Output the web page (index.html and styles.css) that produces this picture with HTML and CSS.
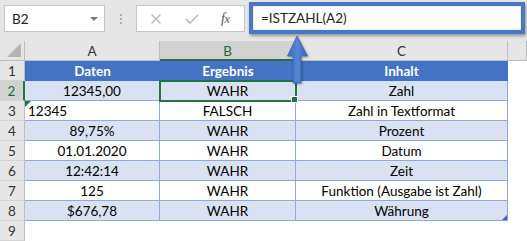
FILE: index.html
```html
<!DOCTYPE html>
<html lang="de">
<head>
<meta charset="utf-8">
<title>ISTZAHL</title>
<link rel="stylesheet" href="styles.css">
</head>
<body>
<div class="app">
  <div class="toolbar">
    <div class="namebox"><span class="name">B2</span><span class="caret"></span></div>
    <div class="grip"><i></i><i></i><i></i></div>
    <div class="fnbox">
      <svg class="ico" width="12" height="12" viewBox="0 0 12 12"><path d="M1.5 1.5 L10.5 10.5 M10.5 1.5 L1.5 10.5" stroke="#b8b8b8" stroke-width="1.4" fill="none"/></svg>
      <svg class="ico" width="14" height="12" viewBox="0 0 14 12"><path d="M1 6 L5 10 L13 2" stroke="#b8b8b8" stroke-width="1.6" fill="none"/></svg>
      <span class="fx"><i>f</i><i class="x">x</i></span>
    </div>
    <div class="formula">=ISTZAHL(A2)</div>
  </div>
  <div class="sheet">
    <div class="corner"><span class="tri"></span></div>
    <div class="ch">A</div>
    <div class="ch sel">B</div>
    <div class="ch">C</div>
    <div class="ch"></div>

    <div class="rh">1</div>
    <div class="c hd">Daten</div>
    <div class="c hd">Ergebnis</div>
    <div class="c hd">Inhalt</div>
    <div class="e"></div>

    <div class="rh sel">2</div>
    <div class="c band">12345,00</div>
    <div class="c band active">WAHR</div>
    <div class="c band">Zahl</div>
    <div class="e"></div>

    <div class="rh">3</div>
    <div class="c left err">12345</div>
    <div class="c">FALSCH</div>
    <div class="c">Zahl in Textformat</div>
    <div class="e"></div>

    <div class="rh">4</div>
    <div class="c band">89,75%</div>
    <div class="c band">WAHR</div>
    <div class="c band">Prozent</div>
    <div class="e"></div>

    <div class="rh">5</div>
    <div class="c">01.01.2020</div>
    <div class="c">WAHR</div>
    <div class="c">Datum</div>
    <div class="e"></div>

    <div class="rh">6</div>
    <div class="c band">12:42:14</div>
    <div class="c band">WAHR</div>
    <div class="c band">Zeit</div>
    <div class="e"></div>

    <div class="rh">7</div>
    <div class="c">125</div>
    <div class="c">WAHR</div>
    <div class="c">Funktion (Ausgabe ist Zahl)</div>
    <div class="e"></div>

    <div class="rh">8</div>
    <div class="c band">$676,78</div>
    <div class="c band">WAHR</div>
    <div class="c band resize">Währung</div>
    <div class="e"></div>

    <div class="rh">9</div>
    <div class="e"></div>
    <div class="e"></div>
    <div class="e"></div>
    <div class="e"></div>
  </div>
  <svg class="arrow" width="26" height="50" viewBox="0 0 26 50">
    <defs>
      <linearGradient id="ag" x1="0" y1="0" x2="1" y2="0">
        <stop offset="0" stop-color="#3f6cc0"/>
        <stop offset="0.5" stop-color="#5585d6"/>
        <stop offset="1" stop-color="#3a66b8"/>
      </linearGradient>
    </defs>
    <path d="M12 1 L2.5 21 L8 21 L8 48 L16 48 L16 21 L22.5 21 Z" fill="url(#ag)" stroke="#3b65b3" stroke-width="0.8"/>
  </svg>
</div>
</body>
</html>
```
FILE: styles.css
```css
html, body {
  margin: 0;
  padding: 0;
  background: #ffffff;
}
.app {
  position: relative;
  width: 527px;
  height: 241px;
  overflow: hidden;
  font-family: Lato, "Liberation Sans", sans-serif;
  font-size: 13.5px;
  color: #000;
}
.toolbar {
  height: 41px;
  background: #e6e6e6;
  display: flex;
  align-items: flex-start;
  box-sizing: border-box;
  padding-top: 2px;
  padding-left: 4px;
}
.namebox {
  margin-top: 3px;
  width: 101px;
  height: 27px;
  box-sizing: border-box;
  background: #fff;
  border: 1px solid #c6c6c6;
  display: flex;
  align-items: center;
  justify-content: space-between;
  padding: 0 6px 0 7px;
  font-size: 13.5px;
  color: #222;
}
.caret {
  width: 0;
  height: 0;
  border-left: 4px solid transparent;
  border-right: 4px solid transparent;
  border-top: 4px solid #777;
}
.grip {
  width: 31px;
  height: 27px;
  margin-top: 3px;
  display: flex;
  flex-direction: column;
  align-items: center;
  justify-content: center;
  gap: 2px;
}
.grip i {
  display: block;
  width: 2px;
  height: 2px;
  background: #b0b0b0;
}
.fnbox {
  margin-top: 3px;
  width: 109px;
  height: 27px;
  box-sizing: border-box;
  background: #fff;
  border: 1px solid #c6c6c6;
  display: flex;
  align-items: center;
  padding-left: 13px;
}
.fnbox .ico:first-child { margin-right: 23px; }
.fnbox .ico:nth-child(2) { margin-right: 22px; }
.fx {
  font-family: "Liberation Serif", serif;
  font-style: italic;
  font-size: 14px;
  color: #555;
  letter-spacing: -0.5px;
}
.fx i { font-style: italic; }
.fx .x { font-size: 12px; }
.formula {
  margin-left: 4px;
  width: 276px;
  height: 32px;
  box-sizing: border-box;
  border: 4px solid #4a76c6;
  background: #fff;
  box-shadow: 1px 2px 3px rgba(0,0,0,0.35), inset 0 0 2px rgba(0,0,0,0.25);
  font-size: 13.5px;
  color: #222;
  line-height: 24px;
  padding-left: 8px;
}
.sheet {
  display: grid;
  grid-template-columns: 25px 135px 136px 212px 19px;
  grid-auto-rows: 20px;
}
.sheet > div {
  box-sizing: border-box;
  line-height: 19px;
  padding-top: 1px;
  white-space: nowrap;
  overflow: hidden;
}
.corner {
  background: #e6e6e6;
  border-right: 1px solid #bdbdbd;
  border-bottom: 1px solid #bdbdbd;
  position: relative;
}
.corner .tri {
  position: absolute;
  right: 3px;
  bottom: 3px;
  width: 14px;
  height: 14px;
  background: #b4b4b4;
  clip-path: polygon(100% 0, 100% 100%, 0 100%);
}
.ch {
  background: #e6e6e6;
  border-right: 1px solid #bdbdbd;
  border-bottom: 1px solid #bdbdbd;
  text-align: center;
  color: #333;
}
.ch.sel {
  background: #d2d2d2;
  color: #1e6b3c;
  border-bottom: 2px solid #217346;
}
.rh {
  background: #e6e6e6;
  border-right: 1px solid #bdbdbd;
  border-bottom: 1px solid #d4d4d4;
  text-align: center;
  color: #333;
}
.rh.sel {
  background: #d2d2d2;
  color: #1e6b3c;
  border-right: 2px solid #217346;
}
.c {
  text-align: center;
  border-right: 1px solid #8ea9db;
  border-bottom: 1px solid #8ea9db;
  background: #fff;
}
.c.band { background: #d9e1f2; }
.c.hd {
  background: #4472c4;
  color: #fff;
  font-weight: bold;
  border-right: 0;
  border-bottom: 0;
}
.c.hd:nth-child(9) { border-right: 1px solid #4472c4; }
.c.left { text-align: left; padding-left: 3px; }
.c.err { position: relative; }
.c.err::before {
  content: "";
  position: absolute;
  left: 0;
  top: 0;
  width: 6px;
  height: 6px;
  background: #1f7a3a;
  clip-path: polygon(0 0, 100% 0, 0 100%);
}
.sheet > .c.active {
  overflow: visible;
  position: relative;
  outline: 2px solid #217346;
  outline-offset: -1px;
  z-index: 2;
}
.c.active::after {
  content: "";
  position: absolute;
  right: -3px;
  bottom: -3px;
  width: 5px;
  height: 5px;
  background: #217346;
  border: 1px solid #fff;
}
.sheet > .c.resize { position: relative; }
.c.resize::after {
  content: "";
  position: absolute;
  right: 0;
  bottom: 0;
  width: 5px;
  height: 5px;
  background: #3f5fb5;
  clip-path: polygon(100% 0, 100% 100%, 0 100%);
}
.e { background: #fff; }
.arrow {
  position: absolute;
  left: 285px;
  top: 35px;
  z-index: 5;
  filter: drop-shadow(1px 1px 1px rgba(0,0,0,0.3));
}
```
